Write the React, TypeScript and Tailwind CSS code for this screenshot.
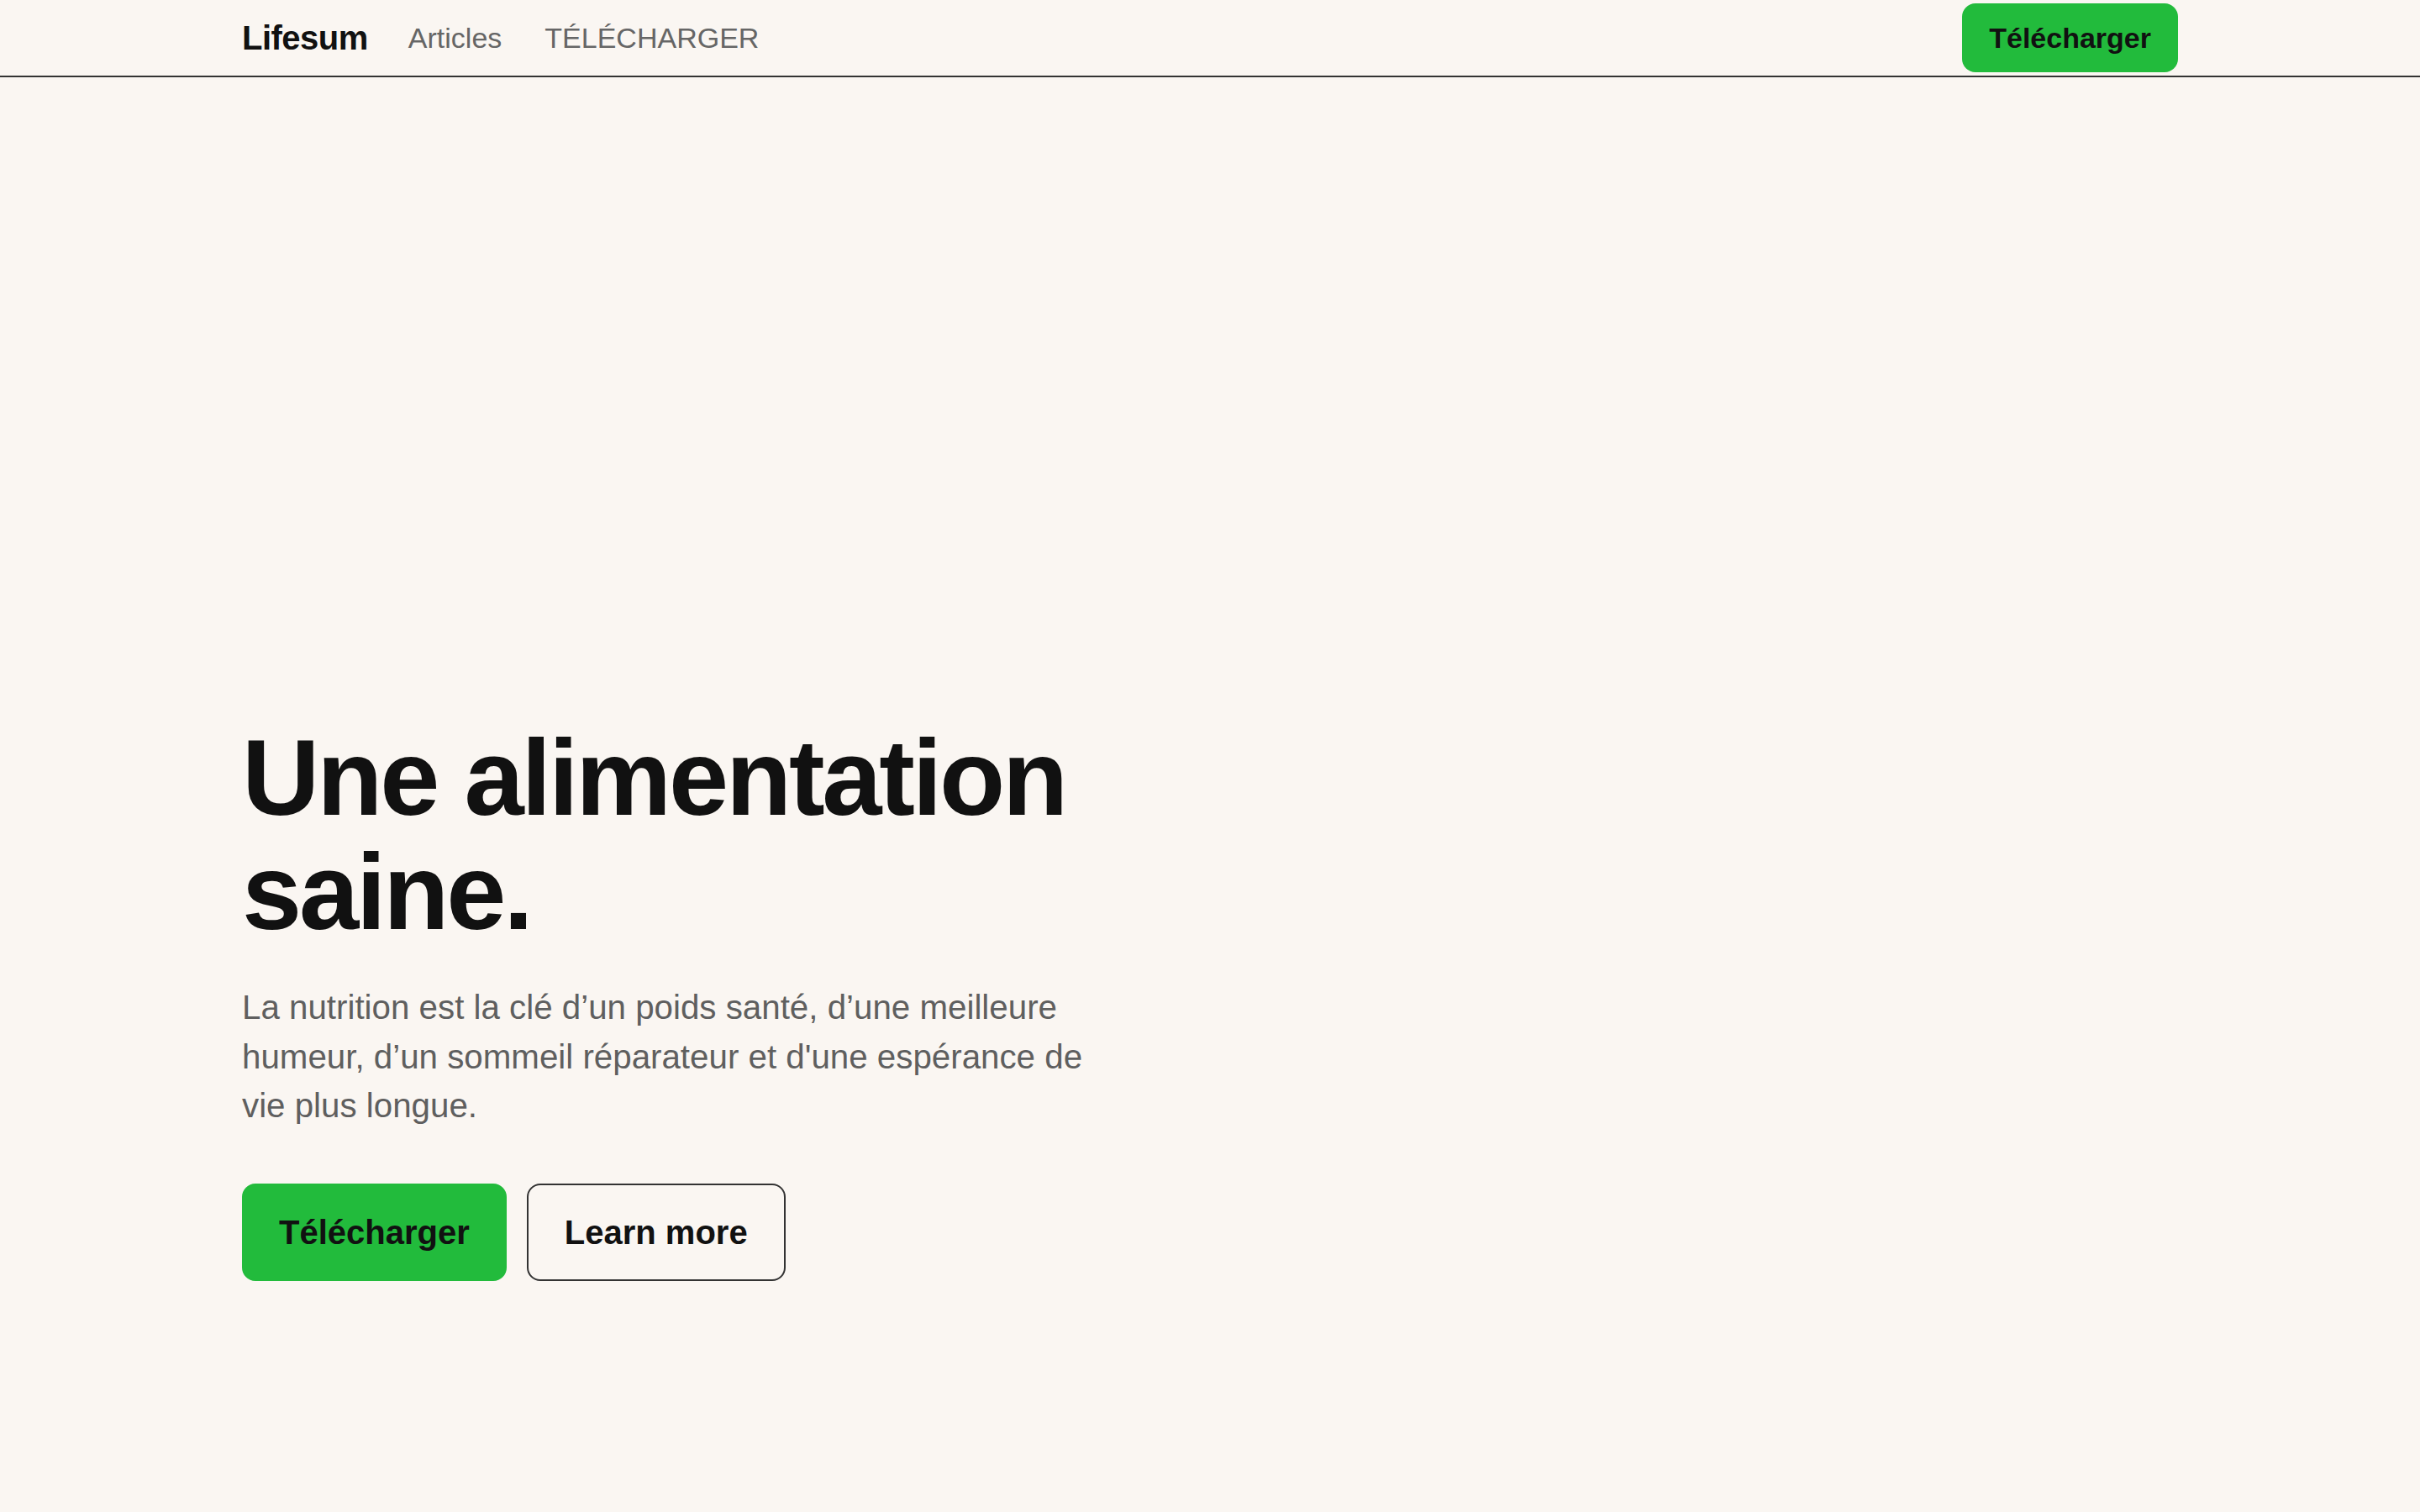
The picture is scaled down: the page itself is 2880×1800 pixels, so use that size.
import React from "react";

function Navbar() {
  return (
    <nav className="w-full border-b-2 border-[#333333]">
      <div className="max-w-[2304px] mx-auto h-[90px] flex items-center justify-between">
        <div className="flex items-center gap-12">
          <a href="#" className="text-[40px] leading-[56px] font-bold tracking-[-0.5px] text-[#111111]">
            Lifesum
          </a>
          <a href="#" className="text-[34px] leading-[50px] text-[#666666]">
            Articles
          </a>
          <a href="#" className="ml-[3px] text-[34px] leading-[50px] text-[#666666]">
            TÉLÉCHARGER
          </a>
        </div>
        <button className="bg-[#22bb3c] text-[#111111] text-[34px] leading-[50px] font-bold px-8 py-4 rounded-2xl">
          Télécharger
        </button>
      </div>
    </nav>
  );
}

function Hero() {
  return (
    <section className="max-w-[2304px] mx-auto pt-[766px] pb-[276px]">
      <div className="max-w-[1024px]">
        <h1 className="text-[128px] leading-[136px] font-bold tracking-tight text-[#111111]">
          Une alimentation saine.
        </h1>
        <p className="mt-[41px] text-[40.3px] leading-[58.5px] text-[#5f5f5f]">
          La nutrition est la clé d’un poids santé, d’une meilleure humeur, d’un sommeil
          réparateur et d'une espérance de vie plus longue.
        </p>
        <div className="mt-[62px] flex items-center gap-6">
          <button className="bg-[#22bb3c] border-2 border-[#22bb3c] text-[#111111] text-[40px] leading-[56px] font-bold px-[42px] py-7 rounded-2xl">
            Télécharger
          </button>
          <button className="border-2 border-[#333333] text-[#111111] text-[40px] leading-[56px] font-bold px-[43px] py-7 rounded-2xl">
            Learn more
          </button>
        </div>
      </div>
    </section>
  );
}

export default function App() {
  return (
    <div className="min-h-screen bg-[#faf6f2] font-['Liberation_Sans',Arial,sans-serif]">
      <Navbar />
      <Hero />
    </div>
  );
}
